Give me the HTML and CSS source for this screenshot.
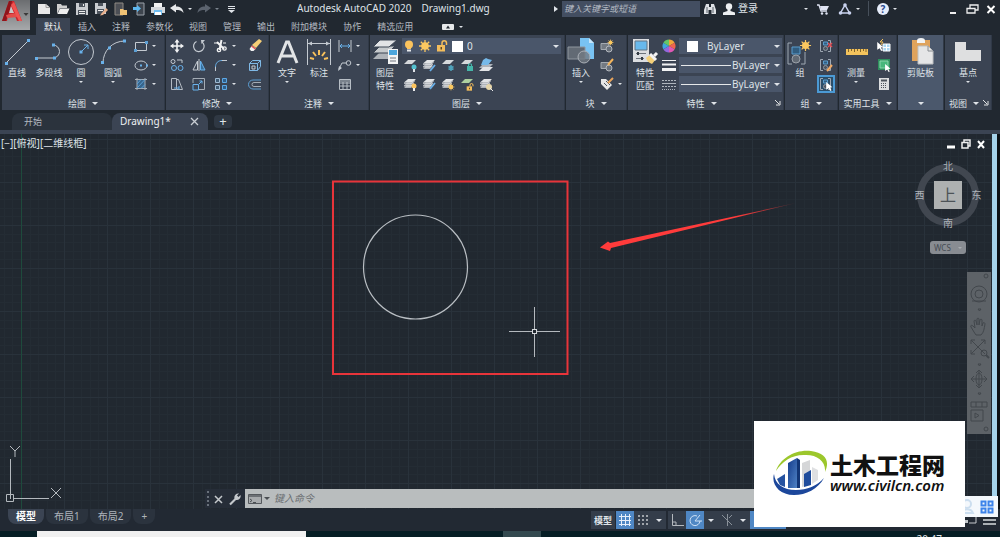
FILE: index.html
```html
<!DOCTYPE html>
<html lang="zh-CN">

<head>
    <meta charset="UTF-8">
    <title>Autodesk AutoCAD 2020 - Drawing1.dwg</title>
    <link rel="stylesheet" href="styles.css">
</head>

<body>

    <!-- shared icons -->
    <svg class="sprite" aria-hidden="true">
        <symbol id="stack" viewBox="0 0 14 14">
            <path d="M4 8h7l-3 3H1zM4 5.500h7l-3 3H1z" fill="#aeb3b9"/>
            <path d="M5 2h8l-4 3.500H1z" fill="#e2e4e6"/>
            <path d="M1 6.200h8l3-2.700M1 8.900h7l3-2.500" fill="none" stroke="#e2e4e6"/>
        </symbol>
        <symbol id="sheet" viewBox="0 0 14 14">
            <path d="M5 2h8L9 6H1z" fill="#d5d8db"/>
        </symbol>
        <symbol id="bulb" viewBox="0 0 10 12">
            <circle cx="5" cy="4.500" r="4" fill="#fbc35d"/>
            <path d="M3 8h4v1H3z" fill="#fbc35d"/>
            <path d="M3 9.500h4v2H3z" fill="#e8eaec"/>
        </symbol>
        <symbol id="sun" viewBox="0 0 14 14">
            <circle cx="7" cy="7" r="3.800" fill="#fbc860"/>
            <path d="M7 1v12M1 7h12M2.800 2.800l8.400 8.400M11.200 2.800l-8.400 8.400" stroke="#fbc860" stroke-width="1.300"/>
        </symbol>
        <symbol id="lock" viewBox="0 0 12 12">
            <path d="M1 5h8v6.500H1z" fill="#f3bd5c"/>
            <path d="M6 5V3a2 2 0 0 1 4.500 0v2" fill="none" stroke="#f3bd5c" stroke-width="1.500"/>
            <path d="M4.500 7h1.500v2.500H4.500z" fill="#5d4a26"/>
        </symbol>
        <symbol id="block" viewBox="0 0 14 14">
            <path d="M1 4.500h8v6H1z" fill="#737a83" stroke="#a4aab1"/>
            <circle cx="9" cy="10" r="3" fill="#68707a" stroke="#b4b9bf"/>
        </symbol>
        <symbol id="bracket" viewBox="0 0 14 14">
            <path d="M4 1.500H1.500v11H4M9 1.500h2.500v11H9" fill="none" stroke="#9fa8b3"/>
            <path d="M4.500 3h4v3h-4z" fill="#315d80" stroke="#5a9ccc"/>
            <circle cx="6.500" cy="9.500" r="2" fill="#4b5561" stroke="#8e97a1"/>
        </symbol>
        <symbol id="cursor" viewBox="0 0 8 11">
            <path d="M0 0l7.500 6.500-3 .3 2 3.400-1.700.8-1.800-3.500L0 9.500z" fill="#fff"/>
        </symbol>
    </svg>

    <header class="top">
        <button class="app-menu" aria-label="应用程序菜单">
            <svg width="30" height="30" viewBox="0 0 30 30">
                <path d="M9 1h5l8 20h-5l-2-5H8l-1 5H2z" fill="#c9252c"/>
                <path d="M9 1h3l-1 5-3 9-2 6H2z" fill="#8f151b"/>
                <path d="M11 6l3 7H9z" fill="#c9c7c6"/>
                <path d="M6 15l10-2 2 4-11 1z" fill="#e24c49"/>
                <path d="M14 2l8 19h-3L11 5z" fill="#ef5350"/>
                <path d="M23.500 13h5L26 16z" fill="#3a3a3a"/>
            </svg>
        </button>

        <div class="titlebar">
            <div class="quick">
                <button aria-label="新建"><svg viewBox="0 0 14 14"><path d="M1 2h8l4 3.500V12H1z" fill="#e8e8e8"/><path d="M9 2v3.500h4" fill="none" stroke="#9a9a9a"/></svg></button>
                <button aria-label="打开"><svg viewBox="0 0 14 14"><path d="M1 12V2h4l1 1.500h5V6H4z" fill="#cfcfcf"/><path d="M4 6.500h9.500L11 12H1.500z" fill="#eee"/></svg></button>
                <button aria-label="保存"><svg viewBox="0 0 14 14"><path d="M1 1h12v12H1z" fill="#c9ccd0"/><path d="M4 1h6v4H4zM3 8h8v5H3z" fill="#4d545d"/><path d="M4 9h6v1H4zM4 11h6v1H4zM8 2h1v2H8z" fill="#eee"/></svg></button>
                <button aria-label="另存为"><svg viewBox="0 0 14 14"><path d="M1 1h11v11H1z" fill="#c9ccd0"/><path d="M4 1h5v3H4zM3 7h7v5H3z" fill="#4d545d"/><path d="M4 8h5v1H4z" fill="#eee"/><path d="M7 12l5-6 2 2-5 5-3 .5z" fill="#e9b18d"/></svg></button>
                <button aria-label="从移动设备打开"><svg viewBox="0 0 14 14"><path d="M2 1h8v12H2z" fill="#4c4f55" stroke="#8f8a83"/><path d="M7 7h3l1 1h3v5H7z" fill="#f0c274"/></svg></button>
                <button aria-label="保存到移动设备"><svg viewBox="0 0 14 14"><path d="M5 1h7v12H5z" fill="#3e454e" stroke="#9aa1a9"/><path d="M1 5h4V3l4 3.500L5 10V8H1z" fill="#5eb7ee"/></svg></button>
                <button aria-label="打印"><svg viewBox="0 0 14 14"><path d="M3 1h8v4H3z" fill="#f2f2f2"/><path d="M0 5h14v6H0z" fill="#d5d8dc"/><path d="M3 8h8v5H3z" fill="#70bdf0"/><path d="M4 10h6v3H4z" fill="#fff"/></svg></button>
                <button class="has-caret" aria-label="放弃"><svg viewBox="0 0 14 14"><path d="M0 6l6-4v2.500c4 0 7 1.500 7.500 6.500C12 8.500 9 8 6 8v2.500z" fill="#e6e8ea"/></svg><i class="caret"></i></button>
                <button class="has-caret" aria-label="重做"><svg viewBox="0 0 14 14"><path d="M14 6L8 2v2.500C4 4.500 1 6 .5 11 2 8.500 5 8 8 8v2.500z" fill="#5b636e"/></svg><i class="caret dim"></i></button>
                <button aria-label="自定义快速访问工具栏"><svg viewBox="0 0 14 14"><path d="M4 4.500h7M4 6.500h7" stroke="#dfe3e8"/><path d="M4 8h7l-3.500 3z" fill="#dfe3e8"/></svg></button>
            </div>
            <h1>Autodesk AutoCAD 2020<span>Drawing1.dwg</span></h1>
            <i class="caret side"></i>
            <input class="search" type="search" aria-label="键入关键字或短语" placeholder="键入关键字或短语">
            <div class="account">
                <button aria-label="搜索"><svg viewBox="0 0 14 14"><path d="M3 2h3v3h2V2h3l2 6v4H8.500V8h-3v4H1V8z" fill="#dfe2e5"/><path d="M4 5v6M10 5v6" stroke="#596069"/></svg></button>
                <button class="login"><svg viewBox="0 0 14 14"><circle cx="7" cy="4.500" r="3.200" fill="#eceef0"/><path d="M5.500 7h3v2l4.500 1.500V13H1v-2.500L5.500 9z" fill="#eceef0"/></svg>登录</button>
            </div>
            <div class="services">
                <i class="caret"></i>
                <button aria-label="Autodesk App Store"><svg viewBox="0 0 14 14"><path d="M1 3h2l2 6h6" fill="none" stroke="#dfe3f2" stroke-width="1.300"/><path d="M4 4h9l-2 4H5z" fill="#dfe3f2"/><circle cx="6" cy="11.500" r="1.200" fill="#dfe3f2"/><circle cx="10.500" cy="11.500" r="1.200" fill="#dfe3f2"/></svg></button>
                <button class="has-caret" aria-label="保持连接"><svg viewBox="0 0 14 14"><path d="M7 3l4.500 8h-9z" fill="none" stroke="#c9d2ee" stroke-width="1.500"/><circle cx="7" cy="3" r="1.800" fill="#c9d2ee"/><circle cx="2.500" cy="11" r="1.800" fill="#c9d2ee"/><circle cx="11.500" cy="11" r="1.800" fill="#c9d2ee"/></svg><i class="caret"></i></button>
                <span class="divider"></span>
                <button class="has-caret help" aria-label="帮助"><span>?</span><i class="caret"></i></button>
            </div>
            <div class="window-buttons">
                <button aria-label="最小化"><svg viewBox="0 0 14 14"><path d="M4 11h6" stroke="#eee" stroke-width="2"/></svg></button>
                <button aria-label="还原"><svg viewBox="0 0 14 14"><path d="M5 6V3h8v5h-3M2 6.500h8V11H2z" fill="none" stroke="#eee" stroke-width="1.300"/></svg></button>
                <button aria-label="关闭"><svg viewBox="0 0 14 14"><path d="M3.500 4l7 7M10.500 4l-7 7" stroke="#fff" stroke-width="2"/></svg></button>
            </div>
        </div>

        <nav class="menu">
            <a href="#" class="active">默认</a>
            <a href="#">插入</a>
            <a href="#">注释</a>
            <a href="#">参数化</a>
            <a href="#">视图</a>
            <a href="#">管理</a>
            <a href="#">输出</a>
            <a href="#">附加模块</a>
            <a href="#">协作</a>
            <a href="#">精选应用</a>
            <button class="has-caret" aria-label="最小化功能区"><svg viewBox="0 0 14 14"><path d="M2 4h10a1 1 0 0 1 1 1v4a1 1 0 0 1-1 1H2a1 1 0 0 1-1-1V5a1 1 0 0 1 1-1z" fill="#e6e8ea"/><path d="M5 8.500h4L7 5.500z" fill="#212830"/></svg><i class="caret"></i></button>
        </nav>
    </header>

    <main class="ribbon">
        <section class="panel">
            <div class="tools">
                <button class="big"><svg viewBox="0 0 28 28"><path d="M3 25L25 3" stroke="#c4cad1"/><path d="M2 24h3v3H2zM24 1h3v3h-3z" fill="#69b1ea"/></svg>直线</button>
                <button class="big wide"><svg viewBox="0 0 28 28"><path d="M2 20h16a6 6 0 0 0 0-13" fill="none" stroke="#c4cad1"/><path d="M0 19h3v3H0zM18 18.500h3v3h-3zM17 5.500h3v3h-3z" fill="#69b1ea"/></svg>多段线</button>
                <button class="big"><svg viewBox="0 0 28 28"><circle cx="14" cy="14" r="12.500" fill="none" stroke="#c4cad1"/><path d="M14 14l7-7M21 11V7h-4" fill="none" stroke="#69b1ea"/><path d="M12.500 12.500h3v3h-3z" fill="#69b1ea"/></svg>圆<i class="caret"></i></button>
                <button class="big wide"><svg viewBox="0 0 28 28"><path d="M4 25C4 13 13 3 26 3" fill="none" stroke="#c4cad1"/><path d="M2 23h3v3H2zM9 8.500h3v3H9zM24 1.500h3v3h-3z" fill="#69b1ea"/></svg>圆弧<i class="caret"></i></button>
                <div class="small draw">
                    <button class="has-caret" aria-label="矩形"><svg viewBox="0 0 14 14"><path d="M1.500 3.500h11v8h-11z" fill="none" stroke="#c4cad1"/><path d="M0 10h3v3H0zM11 2h3v3h-3z" fill="#5c9fd4"/></svg><i class="caret"></i></button>
                    <button class="has-caret" aria-label="椭圆"><svg viewBox="0 0 14 14"><ellipse cx="7" cy="7.500" rx="6" ry="4.500" fill="none" stroke="#c4cad1"/><path d="M6 6.500h2v2H6zM12 6.500h2v2h-2z" fill="#69b1ea"/></svg><i class="caret"></i></button>
                    <button class="has-caret" aria-label="图案填充"><svg viewBox="0 0 14 14"><path d="M3 2.500h8v9H3z" fill="#37658c"/><path d="M3 1v12M11 1v12M1 2.500h12M1 11.500h12" stroke="#a6aeb7"/><path d="M3 7l4-4.500M3 11l8-8.500M7 11.500l4-4" stroke="#5c9fd4"/></svg><i class="caret"></i></button>
                </div>
            </div>
            <button class="foot">绘图<i class="caret"></i></button>
        </section>

        <section class="panel">
            <div class="tools">
                <div class="small modify">
                    <button aria-label="移动"><svg viewBox="0 0 14 14"><path d="M7 2v10M2 7h10" stroke="#f2f3f4" stroke-width="1.600"/><path d="M7 0l2.500 3.500h-5zM7 14l2.500-3.500h-5zM0 7l3.500-2.500v5zM14 7l-3.500-2.500v5z" fill="#f2f3f4"/></svg></button>
                    <button aria-label="旋转"><svg viewBox="0 0 14 14"><path d="M10 3a5.300 5.300 0 1 1-5.500-.5" fill="none" stroke="#c4cad1" stroke-width="1.200"/><path d="M9 1h4L9.500 5z" fill="#c4cad1"/></svg></button>
                    <button class="has-caret" aria-label="修剪"><svg viewBox="0 0 14 14"><path d="M3 3l7 7M7.500 1L5.500 11" stroke="#f2f3f4" stroke-width="2"/><circle cx="5" cy="11" r="1.700" fill="none" stroke="#f2f3f4" stroke-width="1.300"/><circle cx="10.500" cy="9.500" r="1.700" fill="none" stroke="#f2f3f4" stroke-width="1.300"/><path d="M0 4h4M9 4h3" stroke="#f2f3f4"/></svg><i class="caret"></i></button>
                    <button aria-label="删除"><svg viewBox="0 0 14 14"><path d="M11 0l3 2-6 7-4-3z" fill="#f6cf77"/><path d="M4 6.500l4 3-2.500 2.500H3L1.500 10z" fill="#f2f3f4"/><path d="M3.500 7l4 3" stroke="#e3504a" stroke-width="1.500"/></svg></button>
                    <button aria-label="复制"><svg viewBox="0 0 14 14"><circle cx="3" cy="3.500" r="2" fill="none" stroke="#c4cad1"/><path d="M7 2h5v3" fill="none" stroke="#c4cad1"/><circle cx="4" cy="10" r="2.500" fill="none" stroke="#69b1ea"/><circle cx="10.500" cy="10" r="2.500" fill="none" stroke="#69b1ea"/></svg></button>
                    <button aria-label="镜像"><svg viewBox="0 0 14 14"><path d="M5.500 3v9H1z" fill="none" stroke="#c4cad1"/><path d="M8.500 3v9H13z" fill="#386f9b" stroke="#69b1ea"/><path d="M7 1v12" stroke="#c4cad1"/></svg></button>
                    <button class="has-caret" aria-label="圆角"><svg viewBox="0 0 14 14"><path d="M1.500 13V9" stroke="#c4cad1"/><path d="M1.500 9C1.500 5 4 2.500 8 2.500" fill="none" stroke="#69b1ea"/><path d="M8 2.500h5" stroke="#c4cad1"/></svg><i class="caret"></i></button>
                    <button aria-label="分解"><svg viewBox="0 0 14 14"><path d="M1.500 5.500h8v7h-8zM1.500 5.500l3-3h8v6l-3 4M9.500 5.500l3-3" fill="none" stroke="#7fb9e6"/><path d="M4 8h3v3H4z" fill="none" stroke="#c4cad1"/></svg></button>
                    <button aria-label="拉伸"><svg viewBox="0 0 14 14"><path d="M1.500 1.500h5v11h-5zM6.500 2.500h2l4 10h-6" fill="none" stroke="#b4bbc3"/><path d="M4 11h5M9 9v4" stroke="#69b1ea"/></svg></button>
                    <button aria-label="缩放"><svg viewBox="0 0 14 14"><path d="M1 6V1.500h11.500v11H7" fill="none" stroke="#a4acb5"/><path d="M1 7.500h5.500V13H1z" fill="none" stroke="#69b1ea"/><path d="M7 7l3-3M7.500 4H10v2.500" fill="none" stroke="#69b1ea"/></svg></button>
                    <button class="has-caret" aria-label="阵列"><svg viewBox="0 0 14 14"><path d="M1.500 1.500h4v4h-4zM1.500 8.500h4v4h-4z" fill="#3f5b74" stroke="#9db9d2"/><path d="M8.500 1.500h4v4h-4zM8.500 8.500h4v4h-4z" fill="#2f5f8b" stroke="#5ca8e6"/></svg><i class="caret"></i></button>
                    <button aria-label="偏移"><svg viewBox="0 0 14 14"><path d="M13 3H5a4 4 0 0 0 0 9h8" fill="none" stroke="#5c9fd4"/><path d="M13 5.500H6a2 2 0 0 0 0 4h7" fill="none" stroke="#a4acb5"/></svg></button>
                </div>
            </div>
            <button class="foot">修改<i class="caret"></i></button>
        </section>

        <section class="panel">
            <div class="tools">
                <button class="big wide"><svg viewBox="0 0 28 28"><path d="M5 25L13.500 4h2L24 25M9 18h11" fill="none" stroke="#e2e4e6" stroke-width="3"/></svg>文字<i class="caret"></i></button>
                <button class="big"><svg viewBox="0 0 28 28"><path d="M2.500 1v26M25.500 1v26M3 5.500h22" stroke="#c4cad1"/><path d="M3 5.500l4-2v4zM25 5.500l-4-2v4z" fill="#c4cad1"/><path d="M14 12v5M8 14l3 4M20 14l-3 4M5 20l4 1M23 20l-4 1" stroke="#f8c15b" stroke-width="2"/></svg>标注</button>
                <div class="small">
                    <button class="has-caret" aria-label="线性"><svg viewBox="0 0 14 14"><path d="M1 1v12M13 1v12" stroke="#c4cad1"/><path d="M2 7h10M4 5L2 7l2 2M10 5l2 2-2 2" fill="none" stroke="#69b1ea"/></svg><i class="caret"></i></button>
                    <button class="has-caret" aria-label="引线"><svg viewBox="0 0 14 14"><path d="M1 11l3-6h4" fill="none" stroke="#c4cad1"/><path d="M0 13l1-5 3 2z" fill="#c4cad1"/><circle cx="10.500" cy="5" r="2.300" fill="none" stroke="#c4cad1"/></svg><i class="caret"></i></button>
                    <button aria-label="表格"><svg viewBox="0 0 14 14"><path d="M1.500 2.500h11v10h-11zM1.500 6h11M1.500 9h11M5 5v7M9 5v7" fill="none" stroke="#b8bfc6"/><path d="M2 3h10v2H2z" fill="#7a838d"/></svg></button>
                </div>
            </div>
            <button class="foot">注释<i class="caret"></i></button>
        </section>

        <section class="panel">
            <div class="tools">
                <button class="big"><svg viewBox="0 0 28 28"><path d="M9 14h15l-7 7H2z" fill="#aeb3b9"/><path d="M9 8h15l-7 7H2z" fill="#c6cacd" stroke="#3b4453"/><path d="M9 2h17l-8 7H2z" fill="#e2e4e6" stroke="#3b4453"/><path d="M17 11h10v15H17z" fill="#f2f3f4"/><path d="M18 12h8v5h-8z" fill="#4ca6dd"/><path d="M19 20h6M19 23h6" stroke="#707780"/></svg>图层<br>特性</button>
                <div class="layers">
                    <div class="combo">
                        <svg width="10" height="12"><use href="#bulb"/></svg>
                        <svg width="14" height="14"><use href="#sun"/></svg>
                        <svg width="12" height="12"><use href="#lock"/></svg>
                        <span class="swatch"></span>
                        <select aria-label="图层"><option>0</option></select>
                        <i class="caret"></i>
                    </div>
                    <div class="layer-tools">
                        <button aria-label="关闭图层"><svg viewBox="0 0 14 14"><use href="#sheet"/><circle cx="11" cy="9" r="2.500" fill="#54c1cf"/><path d="M10 11h2v3h-2z" fill="#dfe3e8"/></svg></button>
                        <button aria-label="隔离"><svg viewBox="0 0 14 14"><use href="#stack"/><path d="M8 13l5-6" stroke="#69b1ea" stroke-width="1.800"/></svg></button>
                        <button aria-label="冻结"><svg viewBox="0 0 14 14"><use href="#sheet"/><path d="M10 7v6M7.500 8.500l5 3M12.500 8.500l-5 3" stroke="#4fa2bb" stroke-width="1.500"/></svg></button>
                        <button aria-label="锁定"><svg viewBox="0 0 14 14"><use href="#sheet"/><path d="M7 8h6v5H7z" fill="#45b6aa"/><path d="M8.500 8V6h3v2" fill="none" stroke="#45b6aa"/></svg></button>
                        <button aria-label="置为当前"><svg viewBox="0 0 14 14"><path d="M4 6h10l-4 4H0z" fill="#aeb3b9"/><path d="M4 9h10l-4 4H0z" fill="#e2e4e6"/><path d="M4 2l3-2 2 1 4 1-4 5H2z" fill="#76b9e8"/></svg></button>
                        <button aria-label="打开所有图层"><svg viewBox="0 0 14 14"><use href="#stack"/><circle cx="11" cy="9" r="2.500" fill="#fbc35d"/><path d="M10 11h2v3h-2z" fill="#eee"/></svg></button>
                        <button aria-label="取消隔离"><svg viewBox="0 0 14 14"><use href="#stack"/><path d="M8 12l5-6" stroke="#69b1ea" stroke-width="1.800"/></svg></button>
                        <button aria-label="解冻所有图层"><svg viewBox="0 0 14 14"><use href="#stack"/><use href="#sun" x="6" y="6" width="8" height="8"/></svg></button>
                        <button aria-label="解锁"><svg viewBox="0 0 14 14"><path d="M5 2h8L9 6H1z" fill="#aed0a0"/><use href="#lock" x="6" y="6" width="8" height="8"/></svg></button>
                        <button aria-label="匹配图层"><svg viewBox="0 0 14 14"><use href="#stack"/><circle cx="10" cy="10" r="3" fill="#e6d6a9"/><path d="M11 11l3 3" stroke="#eee"/></svg></button>
                    </div>
                </div>
            </div>
            <button class="foot">图层<i class="caret"></i></button>
        </section>

        <section class="panel">
            <div class="tools">
                <button class="big wide"><svg viewBox="0 0 28 28"><path d="M13 0h9l5 5v16H13z" fill="#79c3f3"/><path d="M22 0v5h5" fill="#c8e6fa"/><path d="M1 9h17v12H1z" fill="#626a74" stroke="#8f969e"/><circle cx="17" cy="19" r="6" fill="#737a83" fill-opacity=".8" stroke="#abb0b7"/></svg>插入<i class="caret"></i></button>
                <div class="small">
                    <button aria-label="创建块"><svg viewBox="0 0 14 14"><use href="#block"/><use href="#sun" x="7" y="0" width="7" height="7"/></svg></button>
                    <button aria-label="编辑块"><svg viewBox="0 0 14 14"><use href="#block"/><path d="M8 7l5-6" stroke="#f3b45c" stroke-width="2"/></svg></button>
                    <button class="has-caret" aria-label="编辑属性"><svg viewBox="0 0 14 14"><path d="M1 2h5l6 6-5 5-6-6z" fill="#e6e7e8"/><path d="M4 6l3 3M6 4l4 4" stroke="#505862"/><path d="M8 6l5-5" stroke="#e9a45b" stroke-width="2"/></svg><i class="caret"></i></button>
                </div>
            </div>
            <button class="foot">块<i class="caret"></i></button>
        </section>

        <section class="panel">
            <div class="tools">
                <button class="big wide"><svg viewBox="0 0 28 28"><path d="M2 1h16v23H2z" fill="#dcdee1"/><path d="M4 3h12v9H4z" fill="#68b9ed" stroke="#627483"/><path d="M5 15.500h10M5 20.500h8" stroke="#6c737b"/><path d="M7 14v3M11 19v3" stroke="#333a42" stroke-width="2"/><path d="M15 20l5-4 5 5-4 5c-3-1-5-3-6-6z" fill="#f3cf79"/><path d="M19 16l6 6" stroke="#f4f4f4" stroke-width="3"/><path d="M23 18l3-3" stroke="#f4f4f4" stroke-width="3"/></svg>特性<br>匹配</button>
                <div class="properties">
                    <svg width="14" height="14" viewBox="0 0 14 14"><path d="M7 7V.5A6.500 6.500 0 0 1 12.600 3.700z" fill="#f0a53b"/><path d="M7 7l5.600-3.300a6.500 6.500 0 0 1 0 6.600z" fill="#f0644d"/><path d="M7 7l5.600 3.300A6.500 6.500 0 0 1 7 13.500z" fill="#df58b6"/><path d="M7 7v6.500a6.500 6.500 0 0 1-5.600-3.200z" fill="#9467dc"/><path d="M7 7l-5.600 3.300a6.500 6.500 0 0 1 0-6.600z" fill="#3ea6dd"/><path d="M7 7L1.400 3.700A6.500 6.500 0 0 1 7 .5z" fill="#65c667"/></svg>
                    <div class="combo"><span class="swatch"></span><select aria-label="对象颜色"><option>ByLayer</option></select><i class="caret"></i></div>
                    <svg width="14" height="14" viewBox="0 0 14 14"><path d="M0 2.500h14" stroke="#f2f3f4"/><path d="M0 6.500h14" stroke="#f2f3f4" stroke-width="2"/><path d="M0 11.500h14" stroke="#f2f3f4" stroke-width="3"/></svg>
                    <div class="combo"><span class="line"></span><select aria-label="线宽"><option>ByLayer</option></select><i class="caret"></i></div>
                    <svg width="14" height="14" viewBox="0 0 14 14"><path d="M0 3.500h14M0 9.500h14" stroke="#aeb5bd" stroke-dasharray="2 1"/><path d="M0 6.500h14" stroke="#aeb5bd"/><path d="M0 12.500h14" stroke="#aeb5bd" stroke-dasharray="1 1"/></svg>
                    <div class="combo"><span class="line"></span><select aria-label="线型"><option>ByLayer</option></select><i class="caret"></i></div>
                </div>
            </div>
            <div class="foot-row">
                <button class="foot">特性<i class="caret"></i></button>
                <button class="launcher" aria-label="特性选项板"><svg viewBox="0 0 6 6"><path d="M0 0l4 4M5 1v4H1" fill="none" stroke="#e2e4e6"/></svg></button>
            </div>
        </section>

        <section class="panel">
            <div class="tools">
                <button class="big wide"><svg viewBox="0 0 28 28"><path d="M6 5H2v21h4M15 26h4V14" fill="none" stroke="#9fa8b3"/><path d="M6 9h8v7H6z" fill="#315d80" stroke="#5a9ccc"/><circle cx="10" cy="21" r="4" fill="#626a74" stroke="#9aa0a8"/><use href="#sun" x="13" y="1" width="13" height="13"/></svg>组</button>
                <div class="small">
                    <button aria-label="解除编组"><svg viewBox="0 0 14 14"><use href="#bracket"/><path d="M9 4l4 4M13 4L9 8" stroke="#e34a52" stroke-width="1.500"/></svg></button>
                    <button aria-label="组编辑"><svg viewBox="0 0 14 14"><use href="#bracket"/><path d="M8 13l5-6" stroke="#f0a964" stroke-width="2"/></svg></button>
                    <button class="pressed" aria-label="启用/禁用组选择"><svg viewBox="0 0 14 14"><use href="#bracket"/><use href="#cursor" x="7" y="5" width="7" height="9"/></svg></button>
                </div>
            </div>
            <button class="foot">组<i class="caret"></i></button>
        </section>

        <section class="panel">
            <div class="tools">
                <button class="big wide"><svg viewBox="0 0 28 28"><path d="M4 11h22v6H4z" fill="#f4c35c"/><path d="M6.500 11v3M9.500 11v2M12.500 11v3M15.500 11v2M18.500 11v3M21.500 11v2M24 11v3" stroke="#82652b"/></svg>测量<i class="caret"></i></button>
                <div class="small">
                    <button aria-label="快速选择"><svg viewBox="0 0 14 14"><path d="M6 5h7v7H6z" fill="#a9d8f5" stroke="#fff"/><path d="M9.500 5v7M6 8.500h7" stroke="#fff"/><use href="#cursor" x="0" y="3" width="7" height="9"/><path d="M6 0L3 3h3L4 6" fill="none" stroke="#f3c35c"/></svg></button>
                    <button aria-label="全部选择"><svg viewBox="0 0 14 14"><path d="M1 1h12v11H1z" fill="#2f8f5d"/><path d="M3 3h8v7H3z" fill="#47b77b" stroke="#89d6ab"/><use href="#cursor" x="8" y="6" width="6" height="8"/></svg></button>
                    <button aria-label="快速计算器"><svg viewBox="0 0 14 14"><path d="M2 1h10v12H2z" fill="#dcdee0"/><path d="M4 2.500h6v2H4z" fill="#4d545d"/><path d="M4 6.500h6M4 8.500h6M4 10.500h6" stroke="#4d545d" stroke-dasharray="1 1"/></svg></button>
                </div>
            </div>
            <button class="foot">实用工具<i class="caret"></i></button>
        </section>

        <section class="panel clipboard">
            <div class="tools">
                <button class="big"><svg viewBox="0 0 28 28"><path d="M5 2h18v21H5z" fill="#dfa35c"/><path d="M10 3c0-2 1-3 4-3s4 1 4 3v2h-8z" fill="#f2f3f4"/><path d="M11 8h10l5 5v13H11z" fill="#e5e6e7" stroke="#bdbfc1"/><path d="M21 8v5h5" fill="none" stroke="#888c91"/></svg>剪贴板</button>
            </div>
            <button class="foot" aria-label="剪贴板面板"><i class="caret"></i></button>
        </section>

        <section class="panel">
            <div class="tools">
                <button class="big"><svg viewBox="0 0 28 28"><path d="M1 4h11v8h15v11H1z" fill="#dedfe0"/></svg>基点<i class="caret"></i></button>
            </div>
            <div class="foot-row">
                <button class="foot">视图<i class="caret"></i></button>
                <button class="launcher" aria-label="视图选项"><svg viewBox="0 0 6 6"><path d="M0 0l4 4M5 1v4H1" fill="none" stroke="#e2e4e6"/></svg></button>
            </div>
        </section>
    </main>

    <div class="file-tabs">
        <a href="#" class="file-tab">开始</a>
        <a href="#" class="file-tab current">Drawing1*<svg width="10" height="10" viewBox="0 0 10 10"><path d="M1 1l7 7M8 1L1 8" stroke="#c9ced4" stroke-width="1.300"/></svg></a>
        <button class="add-tab" aria-label="新图形">+</button>
    </div>

    <div class="canvas">
        <svg class="drawing" aria-label="图形">
            <defs>
                <pattern id="grid" x="21" y="5" width="43" height="43" patternUnits="userSpaceOnUse">
                    <path d="M9.500 0v43M17.500 0v43M26.500 0v43M34.500 0v43M0 9.500h43M0 17.500h43M0 26.500h43M0 34.500h43" stroke="#242c34"/>
                    <path d="M.5 0v43M0 .5h43" stroke="#29323b"/>
                </pattern>
                <linearGradient id="tail" x1="0" x2="1">
                    <stop offset=".7" stop-color="#ff3b3b"/>
                    <stop offset="1" stop-color="#ff3b3b" stop-opacity=".2"/>
                </linearGradient>
            </defs>
            <rect width="100%" height="100%" fill="url(#grid)"/>
            <path d="M21.500 0v500" stroke="#1e4a3c"/>
            <rect x="333" y="47.500" width="234.500" height="192.500" fill="none" stroke="#e8343a" stroke-width="2"/>
            <circle cx="415.500" cy="133" r="52" fill="none" stroke="#b9bec3" stroke-width="1.200"/>
            <path d="M509 197.500h23M537 197.500h23M534.500 173v22M534.500 200v23" stroke="#b4b9be"/>
            <rect x="532.500" y="195.500" width="4" height="4" fill="none" stroke="#d5d8db"/>
            <path d="M600 113.500l8-6 2 1.500 186-40L611 114l-1 3z" fill="url(#tail)"/>
            <path d="M10.500 325v40M13 364.500h36M6.500 360.500h7v7h-7z" fill="none" stroke="#b4b9be"/>
            <path d="M51 354l10 10M61 354l-10 10M10 312l5 5 5-5M15 317v6" fill="none" stroke="#b4b9be"/>
        </svg>

        <div class="view-label">[−][俯视][二维线框]</div>

        <div class="view-controls">
            <div class="window-buttons">
                <button aria-label="最小化视口"><svg viewBox="0 0 14 14"><path d="M3 10h8" stroke="#fff" stroke-width="3"/></svg></button>
                <button aria-label="还原视口"><svg viewBox="0 0 14 14"><path d="M5 5V3h6v6h-2M3 5.500h6V11H3z" fill="none" stroke="#eee" stroke-width="1.500"/></svg></button>
                <button aria-label="关闭视口"><svg viewBox="0 0 14 14"><path d="M4 4l6 7M10 4l-6 7" stroke="#fff" stroke-width="2"/></svg></button>
            </div>
            <div class="compass">
                <span class="north">北</span>
                <span class="west">西</span>
                <button class="face">上</button>
                <span class="east">东</span>
                <span class="south">南</span>
            </div>
            <button class="wcs">WCS<i class="caret"></i></button>
        </div>

        <div class="nav-bar">
            <svg viewBox="0 0 24 162" fill="none" stroke="#42474c">
                <circle cx="19" cy="4" r="2"/>
                <circle cx="12" cy="22" r="8"/><circle cx="12" cy="22" r="4"/><path d="M5 29h14"/>
                <path d="M11 37h3l-1.500 2zM11 92h3l-1.500 2zM11 121h3l-1.500 2z"/>
                <path d="M7 60l-3-5c-1-2 1-2 2-1l2 2-1-7c0-1 2-1 2 0l1 4v-6c0-1 2-1 2 0v6l1-5c0-1 2-1 2 0v6l1-3c1-1 2 0 2 1-1 5-1 8-4 11H9z"/>
                <path d="M4 68l14 14M4 82l14-14M4 72v-4h4M14 68h4v4M4 78v4h4"/><circle cx="17" cy="81" r="3"/><path d="M19 83l3 3" stroke-width="2"/>
                <path d="M12 98v18M4 107h16M9 101l3-3 3 3M9 113l3 3 3-3M7 104l-3 3 3 3M17 104l3 3-3 3"/><ellipse cx="12" cy="107" rx="3" ry="6"/>
                <path d="M4 130h16v5H4zM9 130v5M15 130v5M4 138h12v11H4zM8 141v5l4-2.500z"/>
                <circle cx="19" cy="157" r="2"/>
            </svg>
        </div>

        <div class="command">
            <span class="grip"></span>
            <button aria-label="关闭命令行"><svg viewBox="0 0 14 14"><path d="M4 4l7 7M11 4l-7 7" stroke="#c4c8cc" stroke-width="1.500"/></svg></button>
            <button aria-label="自定义"><svg viewBox="0 0 14 14"><path d="M2 12.500L8 6.500" stroke="#c4c8cc" stroke-width="2.200"/><path d="M12.500 3L10.500 5 9 3.500l2-2a4 4 0 0 0-4.500 5l1.500 1.500a4 4 0 0 0 4.500-5z" fill="#c4c8cc"/></svg></button>
            <label class="prompt">
                <svg width="14" height="12" viewBox="0 0 14 12"><path d="M.5 1.500h13v9H.5z" fill="#a8abad" stroke="#55595d"/><path d="M1 2h12v2H1z" fill="#6d7175"/><path d="M2 6l2 1.500L2 9M5 9.500h3" fill="none" stroke="#4a4e52"/></svg>
                <i class="caret dark"></i>
                <input type="text" placeholder="键入命令" aria-label="键入命令">
            </label>
        </div>
    </div>

    <footer class="status">
        <nav class="layouts">
            <a href="#" class="active">模型</a>
            <a href="#">布局1</a>
            <a href="#">布局2</a>
            <button aria-label="新建布局">+</button>
        </nav>
        <div class="modes">
            <button class="model">模型</button>
            <button class="on" aria-label="栅格"><svg viewBox="0 0 14 14"><path d="M1 3.500h12M1 7.500h12M1 11.500h12M3.500 1v12M7.500 1v12M11.500 1v12" stroke="#e6effa"/></svg></button>
            <button aria-label="捕捉"><svg viewBox="0 0 14 14"><path d="M2 3h10M2 7h10M2 11h10" stroke="#c4c8cc" stroke-width="1.500" stroke-dasharray="2 2"/></svg></button>
            <button class="more" aria-label="捕捉设置"><i class="caret"></i></button>
            <button class="apart" aria-label="正交"><svg viewBox="0 0 14 14"><path d="M2.500 1v11.500H14M2.500 9H6v3.500" fill="none" stroke="#b4b9be"/></svg></button>
            <button class="on" aria-label="极轴追踪"><svg viewBox="0 0 14 14"><path d="M12 8a5 5 0 1 1-3-5M7 8l5-6M7 8h7" fill="none" stroke="#cfe2f6"/></svg></button>
            <button class="more" aria-label="极轴设置"><i class="caret"></i></button>
            <button aria-label="等轴测草图"><svg viewBox="0 0 14 14"><path d="M2 2l10 10M7.500 1v12M9 5l3-3" stroke="#89919a"/></svg></button>
            <button class="more" aria-label="等轴测设置"><i class="caret"></i></button>
            <button class="on" aria-label="对象捕捉追踪"><svg viewBox="0 0 14 14"><path d="M2 12L12 3v9z" fill="none" stroke="#cfe2f6"/></svg></button>
            <button class="on" aria-label="对象捕捉"></button>
            <span class="spacer"></span>
            <button class="plain" aria-label="全屏显示"><svg viewBox="0 0 14 14"><path d="M1 3h11v7H5" fill="none" stroke="#c4c8cc"/><path d="M1 7h3v3H1z" fill="#c4c8cc"/></svg></button>
            <button class="plain" aria-label="自定义状态栏"><svg viewBox="0 0 14 14"><path d="M1 3h13M1 7h13M1 11h13" stroke="#d8dbde" stroke-width="1.500"/></svg></button>
        </div>
    </footer>

    <div class="taskbar">
        <div class="taskbar-search"></div>
        <div class="taskbar-app"></div>
        <time>20:47</time>
    </div>

    <div class="float-bar">
        <svg width="14" height="18" viewBox="0 0 14 18"><circle cx="6" cy="6" r="4" fill="none" stroke="#ccdeef" stroke-width="2"/><path d="M0 15c2-5 10-5 12 0z" fill="none" stroke="#ccdeef" stroke-width="2"/></svg>
        <svg width="14" height="14" viewBox="0 0 14 14"><path d="M1.500 1.500h4v4h-4zM8.500 1.500h4v4h-4zM1.500 8.500h4v4h-4zM8.500 8.500h4v4h-4z" fill="none" stroke="#3d83ea" stroke-width="2"/></svg>
    </div>

    <div class="watermark">
        <svg width="56" height="48" viewBox="0 0 56 48">
            <defs>
                <linearGradient id="tower" x1="0" x2="1" y2="1">
                    <stop offset="0" stop-color="#143c8c"/>
                    <stop offset="1" stop-color="#4f82c4"/>
                </linearGradient>
            </defs>
            <path d="M30 13l8-3v25l-8 2z" fill="#d5d6d8"/>
            <path d="M40 17l6 3v10l-6 4z" fill="#dfe0e2"/>
            <path d="M5 29l8-5v13l-5-2z" fill="#2552a0"/>
            <path d="M16 13l9-5v30h-9z" fill="url(#tower)"/>
            <path d="M25 8l3 2v28h-3z" fill="#123575"/>
            <path d="M32 24l7-4v15l-7 2z" fill="#1f4c9c"/>
            <path d="M4 21C8 8 24-1 39 1c15 2 19 10 14 21C54 12 46 5 34 5 21 4 10 11 4 21z" fill="#9cc72c"/>
            <path d="M2 24c-3 10 5 21 20 21 12 0 24-6 30-17-7 8-17 12-28 12C11 40 3 34 2 24z" fill="#1c479b"/>
        </svg>
        <div>
            <strong>土木工程网</strong>
            <em>www.civilcn.com</em>
        </div>
    </div>

</body>

</html>
```

FILE: styles.css
```css
* {
    box-sizing: border-box;
}

body {
    position: relative;
    display: flex;
    flex-direction: column;
    height: 100vh;
    margin: 0;
    overflow: hidden;
    background: #212830;
    color: #dfe3e8;
    font-family: "Noto Sans", "Noto Sans CJK SC", sans-serif;
    font-size: 9px;
    line-height: 13px;
}

a {
    color: inherit;
    text-decoration: none;
}

button,
input,
select {
    margin: 0;
    padding: 0;
    border: 0;
    background: none;
    color: inherit;
    font: inherit;
}

svg {
    display: block;
    flex: none;
}

button svg {
    width: 14px;
    height: 14px;
}

.sprite {
    position: absolute;
    width: 0;
    height: 0;
}

.caret {
    flex: none;
    border: 3px solid transparent;
    border-top-color: #dfe3e8;
    border-bottom: 0;
}

.caret.dim {
    border-top-color: #7b838d;
}

.caret.dark {
    border-top-color: #4a4e52;
}

.caret.side {
    border: 3px solid transparent;
    border-left: 4px solid #dfe3e8;
    border-right: 0;
}

.has-caret {
    display: flex;
    align-items: center;
    gap: 4px;
}

.small .caret,
.quick .caret,
.services .caret,
.menu .caret {
    border-width: 2px;
    border-bottom: 0;
}

/* title bar and menu */

.top {
    display: grid;
    grid-template-columns: 30px 1fr;
    grid-template-rows: 18px 17px;
}

.app-menu {
    grid-row: 1 / 3;
    height: 30px;
    background: linear-gradient(#6b6d70, #a7a9ab);
}

.app-menu svg {
    width: 30px;
    height: 30px;
}

.titlebar {
    display: flex;
    align-items: center;
    height: 17px;
    padding: 0 2px 0 7px;
}

.quick {
    display: flex;
    gap: 5px;
    width: 260px;
}

.titlebar h1 {
    flex: 1;
    margin: 0;
    font-size: 10px;
    font-weight: normal;
    white-space: nowrap;
}

.titlebar h1 span {
    margin-left: 10px;
}

.search {
    width: 138px;
    height: 16px;
    margin-left: 4px;
    padding: 0 2px;
    background: #434e61;
    font-style: italic;
}

.search::placeholder {
    color: #b4bac3;
}

.account {
    display: flex;
    gap: 5px;
    width: 104px;
    padding-left: 3px;
}

.login {
    display: flex;
    align-items: center;
    gap: 2px;
    font-size: 10px;
}

.services {
    display: flex;
    align-items: center;
    gap: 8px;
    width: 142px;
}

.divider {
    width: 1px;
    height: 15px;
    background: #47505b;
}

.help span {
    width: 12px;
    height: 12px;
    border-radius: 50%;
    background: #e6edfb;
    color: #26468c;
    font-size: 10px;
    font-weight: bold;
    line-height: 12px;
}

.window-buttons {
    display: flex;
    gap: 5px;
}

.menu {
    display: flex;
    padding-left: 6px;
    color: #b4bac1;
}

.menu a {
    padding: 2px 8px;
}

.menu a.active {
    background: #3b4453;
    color: #eef0f2;
}

.menu button {
    padding-left: 20px;
}

/* ribbon */

.ribbon {
    display: grid;
    grid-template-columns: 163fr 103fr 99fr 195fr 61fr 156fr 53fr 58fr 46fr 47fr;
    gap: 1px;
    height: 75px;
    padding: 0 8px 0 2px;
}

.panel {
    display: flex;
    flex-direction: column;
    min-width: 0;
    border-right: 1px solid #303947;
    background: #3b4453;
}

.tools {
    display: flex;
    flex: 1;
    padding-top: 3px;
}

.big {
    display: flex;
    flex-direction: column;
    align-items: center;
    width: 30px;
    white-space: nowrap;
}

.big.wide {
    width: 34px;
}

.big svg {
    width: 28px;
    height: 28px;
}

.big .caret {
    margin-top: 2px;
    border-width: 2px;
    border-bottom: 0;
}

.small {
    display: grid;
    align-content: start;
    gap: 5px;
    padding: 1px 4px;
}

.modify {
    grid-template-columns: 14px 14px 26px 14px;
    column-gap: 8px;
}

.pressed {
    outline: 2px solid #4b9ad5;
    background: #2b4d68;
}

.foot {
    display: flex;
    flex: none;
    align-items: center;
    justify-content: center;
    gap: 6px;
    height: 14px;
    width: 100%;
    white-space: nowrap;
}

.foot-row {
    display: flex;
    align-items: center;
}

.foot-row .foot {
    width: auto;
    flex: 1;
}

.launcher {
    padding-right: 2px;
}

.launcher svg {
    width: 6px;
    height: 6px;
}

.layers {
    flex: 1;
    padding: 0 3px 0 2px;
}

.layer-tools {
    display: grid;
    grid-template-columns: repeat(5, 14px);
    gap: 5px;
    padding: 4px 0 0 1px;
}

.combo {
    display: flex;
    align-items: center;
    gap: 4px;
    min-width: 0;
    height: 16px;
    padding: 0 2px;
    background: #4a566a;
}

.combo select {
    flex: 1;
    min-width: 0;
    appearance: none;
    font-size: 10px;
}

.swatch {
    width: 11px;
    height: 11px;
    background: #fff;
}

.line {
    width: 50px;
    height: 1px;
    background: #e6e8ea;
}

.properties {
    display: grid;
    grid-template-columns: 14px 1fr;
    align-content: start;
    align-items: center;
    flex: 1;
    gap: 3px;
    padding-right: 1px;
}

.properties .combo {
    gap: 1px;
}

.properties .swatch {
    margin: 0 8px 0 6px;
}

.clipboard {
    background: #4b586c;
}

.clipboard .tools,
.clipboard + .panel .tools {
    justify-content: center;
}

/* file tabs */

.file-tabs {
    display: flex;
    align-items: center;
    height: 24px;
    padding: 3px 0 0 12px;
    border-bottom: 4px solid #3b4453;
}

.file-tab {
    display: flex;
    align-items: center;
    height: 17px;
    width: 100px;
    padding-left: 12px;
    border-radius: 8px 8px 0 0;
    background: #2b333d;
    color: #b4bac1;
}

.file-tab.current {
    justify-content: space-between;
    width: 96px;
    padding: 0 8px;
    background: #3b4453;
    color: #eef0f2;
    font-size: 10px;
}

.add-tab {
    width: 18px;
    height: 13px;
    margin-left: 6px;
    border-radius: 4px;
    background: #2f3843;
    font-size: 13px;
}

/* drawing area */

.canvas {
    position: relative;
    flex: 1;
    border-right: 3px solid #0c1116;
    overflow: hidden;
    box-shadow: inset -5px 0 #a4d2ea;
}

.drawing {
    position: absolute;
    top: 0;
    left: 0;
    width: calc(100% - 5px);
    height: 100%;
}

.view-label {
    position: absolute;
    top: 3px;
    left: 1px;
    font-size: 10px;
}

.view-controls {
    position: absolute;
    top: 3px;
    right: 9px;
    display: flex;
    flex-direction: column;
    align-items: center;
}

.view-controls .window-buttons {
    gap: 1px;
    align-self: flex-end;
}

.compass,
.wcs {
    margin-right: 9px;
}

.compass {
    display: grid;
    grid-template: 17px 28px 17px / 17px 28px 17px;
    place-items: center;
    place-content: center;
    width: 62px;
    height: 62px;
    margin-top: 13px;
    border: 7px solid #414750;
    border-radius: 50%;
    color: #aeb3b9;
    font-size: 10px;
}

.north,
.south {
    grid-column: 2;
}

.north {
    grid-row: 1;
    margin-bottom: 12px;
}

.south {
    grid-row: 3;
    margin-top: 12px;
}

.west {
    margin-right: 12px;
}

.east {
    margin-left: 12px;
}

.west,
.face,
.east {
    grid-row: 2;
}

.face {
    width: 28px;
    height: 28px;
    background: #aeb1b1;
    color: #4c5357;
    font-size: 16px;
    line-height: 28px;
}

.wcs {
    display: flex;
    align-items: center;
    justify-content: space-between;
    width: 36px;
    height: 13px;
    margin-top: 15px;
    padding: 0 4px;
    border-radius: 3px;
    background: #888c92;
    color: #454b53;
    font-size: 8px;
}

.wcs .caret {
    border-width: 2px;
    border-top-color: #a9adb1;
    border-bottom: 0;
}

.nav-bar {
    position: absolute;
    top: 138px;
    right: 6px;
    width: 24px;
    background: #5d6267;
}

.command {
    position: absolute;
    right: 32px;
    bottom: 1px;
    left: 205px;
    display: flex;
    align-items: center;
    height: 19px;
    background: #262d38;
}

.command button {
    margin-right: 3px;
}

.grip {
    height: 15px;
    margin: 0 2px;
    border-left: 2px dotted #69717b;
}

.prompt {
    display: flex;
    flex: 1;
    align-items: center;
    gap: 2px;
    height: 100%;
    padding: 0 3px;
    background: #b9bdbe;
}

.prompt input {
    flex: 1;
    padding-left: 2px;
    font-size: 10px;
    font-style: italic;
}

.prompt input::placeholder {
    color: #6a6e71;
}

/* status bar */

.status {
    display: flex;
    height: 22px;
    background: #222933;
}

.layouts {
    display: flex;
    align-items: flex-start;
    gap: 2px;
    width: 591px;
    padding-left: 8px;
    font-size: 10px;
    color: #aeb4bb;
}

.layouts a,
.layouts button {
    height: 15px;
    padding: 1px 8px;
    border-radius: 0 0 8px 8px;
    background: #2b333e;
}

.layouts a.active {
    background: #3b4453;
    color: #fff;
    font-weight: bold;
}

.modes {
    display: flex;
    flex: 1;
    align-items: center;
    padding: 0 2px 0 0;
}

.modes button {
    display: flex;
    align-items: center;
    justify-content: center;
    width: 18px;
    height: 18px;
    background: #343d4a;
}

.modes .model {
    width: 24px;
    margin-right: 1px;
    font-weight: bold;
}

.modes .more {
    width: 14px;
}

.modes .apart {
    margin-left: 2px;
}

.modes .on {
    background: #4f87c4;
}

.modes .plain {
    background: none;
}

.spacer {
    flex: 1;
}

.taskbar {
    display: flex;
    height: 6px;
    overflow: hidden;
    background: #061e25;
}

.taskbar-search {
    width: 269px;
    margin-left: 37px;
    background: #f0f0f0;
}

.taskbar-app {
    width: 38px;
    margin-left: 197px;
    background: #344a50;
}

.taskbar time {
    margin-left: auto;
    padding: 2px 58px 0 0;
    font-size: 10px;
}

/* things floating over the window */

.float-bar {
    position: absolute;
    right: 2px;
    bottom: 20px;
    display: flex;
    align-items: center;
    gap: 5px;
    height: 21px;
    padding: 0 4px;
    background: #f4f8fc;
}

.watermark {
    position: absolute;
    right: 35px;
    bottom: 10px;
    display: flex;
    align-items: center;
    gap: 2px;
    width: 211px;
    height: 106px;
    padding: 0 18px;
    background: #fff;
    color: #111;
}

.watermark strong,
.watermark em {
    display: block;
    white-space: nowrap;
}

.watermark strong {
    font-family: "Noto Sans CJK SC", sans-serif;
    font-size: 23px;
    font-weight: 900;
    line-height: 22px;
}

.watermark em {
    font-size: 15px;
    font-weight: 600;
    line-height: 20px;
}
```
